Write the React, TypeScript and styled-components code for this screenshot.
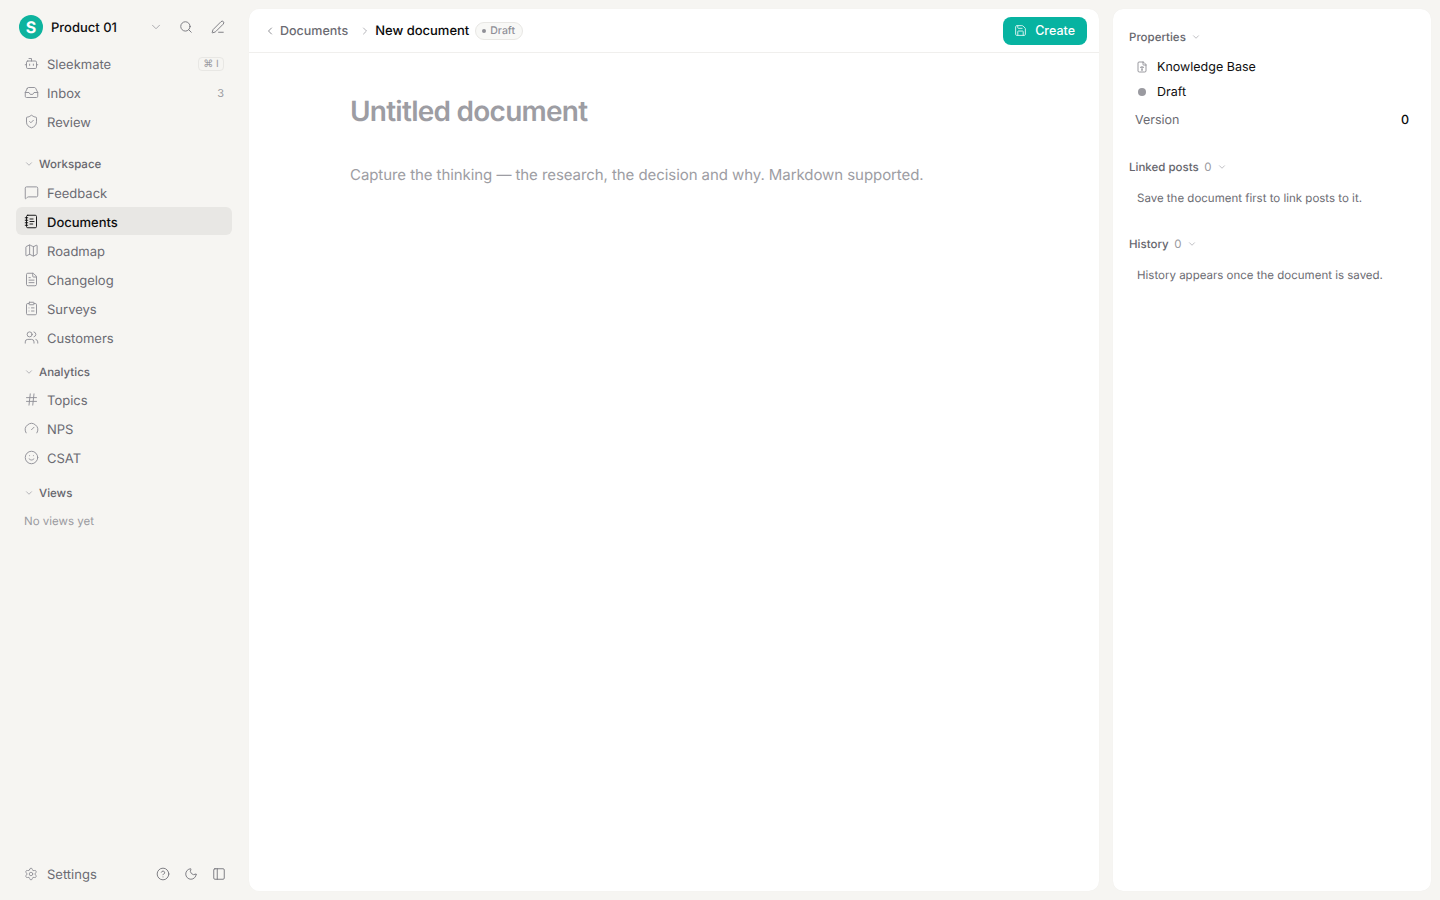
import { createGlobalStyle, styled } from "styled-components"
import {
  Bot,
  ChevronDown,
  ChevronLeft,
  ChevronRight,
  CircleHelp,
  ClipboardList,
  FileText,
  FileType,
  Gauge,
  Hash,
  Inbox,
  Map,
  MessageSquare,
  Moon,
  NotebookText,
  PanelLeft,
  PenLine,
  Save,
  Search,
  Settings,
  ShieldCheck,
  Smile,
  Users,
  type LucideIcon,
} from "lucide-react"

const GlobalStyle = createGlobalStyle`
  html, body {
    margin: 0;
    padding: 0;
    height: 100%;
    background: #f6f5f2;
  }
  body {
    font-family: Inter, "Liberation Sans", sans-serif;
    color: #0a0a0a;
    text-rendering: geometricPrecision;
  }
  * {
    box-sizing: border-box;
  }
`

const Shell = styled.div`
  display: flex;
  width: 1440px;
  height: 900px;
  overflow: hidden;
  padding: 9px 9px 9px 0;
`

const Sidebar = styled.aside`
  display: flex;
  flex-direction: column;
  flex: 0 0 249px;
  height: 882px;
  padding: 0 17px 0 16px;
`

const BrandRow = styled.div`
  display: flex;
  align-items: center;
  height: 36px;
  padding-left: 3px;
  color: #0f0f10;
  font-size: 13px;
  font-weight: 500;
`

const BrandName = styled.span`
  padding-top: 2px;
`

const Logo = styled.div`
  display: flex;
  align-items: center;
  justify-content: center;
  width: 24px;
  height: 24px;
  margin-right: 8px;
  border-radius: 50%;
  background: #0db39e;
  color: #fff;
  font-size: 16px;
  font-weight: 700;
`

const BrandIcons = styled.div`
  display: flex;
  align-items: center;
  margin-left: auto;
  padding-right: 7px;
  color: #6f6f76;
`

const BrandIcon = styled.span<{ $gap?: number }>`
  display: flex;
  margin-left: ${(p) => p.$gap ?? 0}px;
`

const NavList = styled.nav<{ $top: number }>`
  display: flex;
  flex-direction: column;
  gap: 1px;
  margin-top: ${(p) => p.$top}px;
`

const NavRow = styled.div<{ $active?: boolean }>`
  display: flex;
  align-items: center;
  height: 28px;
  padding: 0 8px 0 7.5px;
  border-radius: 6px;
  background: ${(p) => (p.$active ? "#e8e7e4" : "transparent")};
  color: ${(p) => (p.$active ? "#0f0f10" : "#6b6b72")};
  font-size: 13px;
  font-weight: ${(p) => (p.$active ? 500 : 400)};
  svg {
    margin-top: 1px;
    color: ${(p) => (p.$active ? "#0f0f10" : "#8f8f96")};
  }
`

const NavLabel = styled.span`
  margin-left: 8.5px;
  padding-top: 4px;
`

const FooterLabel = styled.span`
  margin-left: 9px;
  padding-top: 2px;
`

const Shortcut = styled.span`
  display: flex;
  align-items: center;
  justify-content: center;
  margin: 2px 0 0 auto;
  width: 26px;
  height: 14px;
  border: 1px solid #e8e7e4;
  border-radius: 4px;
  color: #9a9aa0;
  font-size: 10px;
  line-height: 1;
`

const Count = styled.span`
  margin: 2px 0 0 auto;
  color: #9a9aa0;
  font-size: 11px;
`

const SectionHead = styled.div<{ $top: number }>`
  display: flex;
  align-items: center;
  gap: 5px;
  height: 16px;
  margin-top: ${(p) => p.$top}px;
  padding-left: 8px;
  color: #66666d;
  font-size: 11.5px;
  font-weight: 500;
  svg {
    color: #8f8f96;
  }
`

const EmptyViews = styled.div`
  margin-top: 13px;
  padding-left: 8px;
  color: #9a9aa0;
  font-size: 11.5px;
  line-height: 14px;
`

const SidebarFooter = styled.div`
  display: flex;
  align-items: center;
  height: 28px;
  margin-top: auto;
  margin-bottom: 3px;
  padding: 0 6px 0 8px;
  color: #6b6b72;
  font-size: 13px;
  svg {
    color: #8f8f96;
  }
`

const FooterIcons = styled.div`
  display: flex;
  align-items: center;
  gap: 14px;
  margin-left: auto;
  svg {
    color: #6f6f76;
  }
`

const Panel = styled.section`
  background: #fff;
  border-radius: 10px;
  box-shadow: 0 0 1px rgba(0, 0, 0, 0.06);
`

const Main = styled(Panel)`
  flex: 0 0 850px;
  display: flex;
  flex-direction: column;
`

const TopBar = styled.header`
  display: flex;
  align-items: center;
  height: 44px;
  padding: 0 12px 0 15px;
  border-bottom: 1px solid #f0efed;
`

const Crumb = styled.span`
  margin-left: 4px;
  padding-top: 2px;
  color: #6b6b72;
  font-size: 12.5px;
  font-weight: 450;
`

const Separator = styled.span`
  display: flex;
  margin: 0 4px 0 11px;
  color: #9a9aa0;
`

const CrumbCurrent = styled.span`
  color: #0a0a0a;
  font-size: 13px;
  font-weight: 450;
`

const DraftTag = styled.span`
  display: flex;
  align-items: center;
  gap: 4px;
  height: 18px;
  margin-left: 6px;
  padding: 0 7px 0 6px;
  border: 1px solid #e8e7e4;
  border-radius: 9px;
  background: #f8f8f6;
  color: #8f8f96;
  font-size: 10.5px;
  font-weight: 500;
`

const TagDot = styled.i`
  width: 4px;
  height: 4px;
  border-radius: 50%;
  background: #8f8f96;
`

const CreateButton = styled.button`
  display: flex;
  align-items: center;
  gap: 8px;
  height: 28px;
  margin-left: auto;
  padding: 0 12px 0 11.5px;
  border: 0;
  border-radius: 8px;
  background: #07b3a1;
  color: #fff;
  font-family: inherit;
  font-size: 12.5px;
  font-weight: 500;
  svg {
    opacity: 0.85;
  }
`

const Editor = styled.div`
  padding: 40px 101px 0;
`

const TitleText = styled.h1`
  margin: 0;
  color: #9d9da3;
  font-size: 28px;
  font-weight: 600;
  line-height: 36px;
  letter-spacing: -0.75px;
`

const BodyHint = styled.p`
  margin: 34px 0 0;
  color: #9d9da3;
  font-size: 15px;
  line-height: 24px;
  letter-spacing: -0.07px;
`

const Aside = styled(Panel)`
  flex: 0 0 318px;
  margin-left: 14px;
  padding: 20px 16px;
`

const AsideHead = styled.div<{ $top?: number }>`
  display: flex;
  align-items: center;
  gap: 5.5px;
  height: 16px;
  margin-top: ${(p) => p.$top ?? 0}px;
  color: #66666d;
  font-size: 11.5px;
  font-weight: 500;
  svg {
    color: #9a9aa0;
  }
`

const HeadCount = styled.span`
  color: #9a9aa0;
  font-weight: 400;
`

const PropRow = styled.div<{ $top: number }>`
  display: flex;
  align-items: center;
  height: 20px;
  margin-top: ${(p) => p.$top}px;
  padding-left: 7px;
  color: #0f0f10;
  font-size: 12.5px;
  svg {
    color: #7a7a80;
  }
`

const PropIcon = styled.span`
  display: flex;
  align-items: center;
  justify-content: center;
  width: 12px;
  margin-right: 9px;
`

const StatusDot = styled.i`
  width: 8px;
  height: 8px;
  border-radius: 50%;
  background: #9a9aa0;
`

const VersionRow = styled.div`
  display: flex;
  align-items: center;
  justify-content: space-between;
  height: 20px;
  margin-top: 8px;
  padding: 0 6px;
  color: #6b6b72;
  font-size: 12.5px;
  b {
    color: #0a0a0a;
    font-weight: 500;
  }
`

const AsideNote = styled.p`
  margin: 15px 0 0;
  padding-left: 8px;
  color: #6b6b72;
  font-size: 11.5px;
  line-height: 16px;
`

type NavItem = { label: string; icon: LucideIcon; active?: boolean }

const workspace: NavItem[] = [
  { label: "Feedback", icon: MessageSquare },
  { label: "Documents", icon: NotebookText, active: true },
  { label: "Roadmap", icon: Map },
  { label: "Changelog", icon: FileText },
  { label: "Surveys", icon: ClipboardList },
  { label: "Customers", icon: Users },
]

const analytics: NavItem[] = [
  { label: "Topics", icon: Hash },
  { label: "NPS", icon: Gauge },
  { label: "CSAT", icon: Smile },
]

const renderRow = ({ label, icon: Icon, active }: NavItem) => (
  <NavRow key={label} $active={active}>
    <Icon size={15} strokeWidth={1.5} />
    <NavLabel>{label}</NavLabel>
  </NavRow>
)

const App = () => {
  return (
    <>
      <GlobalStyle />
      <Shell>
        <Sidebar>
          <BrandRow>
            <Logo>S</Logo>
            <BrandName>Product 01</BrandName>
            <BrandIcons>
              <BrandIcon>
                <ChevronDown size={14} strokeWidth={1.5} color="#a0a0a6" />
              </BrandIcon>
              <BrandIcon $gap={16}>
                <Search size={14} strokeWidth={1.5} />
              </BrandIcon>
              <BrandIcon $gap={18}>
                <PenLine size={14} strokeWidth={1.5} />
              </BrandIcon>
            </BrandIcons>
          </BrandRow>

          <NavList $top={4}>
            <NavRow>
              <Bot size={15} strokeWidth={1.5} />
              <NavLabel>Sleekmate</NavLabel>
              <Shortcut>⌘ I</Shortcut>
            </NavRow>
            <NavRow>
              <Inbox size={15} strokeWidth={1.5} />
              <NavLabel>Inbox</NavLabel>
              <Count>3</Count>
            </NavRow>
            <NavRow>
              <ShieldCheck size={15} strokeWidth={1.5} />
              <NavLabel>Review</NavLabel>
            </NavRow>
          </NavList>

          <SectionHead $top={21}>
            <ChevronDown size={10} strokeWidth={1.5} />
            Workspace
          </SectionHead>
          <NavList $top={6}>{workspace.map(renderRow)}</NavList>

          <SectionHead $top={13}>
            <ChevronDown size={10} strokeWidth={1.5} />
            Analytics
          </SectionHead>
          <NavList $top={5}>{analytics.map(renderRow)}</NavList>

          <SectionHead $top={14}>
            <ChevronDown size={10} strokeWidth={1.5} />
            Views
          </SectionHead>
          <EmptyViews>No views yet</EmptyViews>

          <SidebarFooter>
            <Settings size={14} strokeWidth={1.5} />
            <FooterLabel>Settings</FooterLabel>
            <FooterIcons>
              <CircleHelp size={14} strokeWidth={1.5} />
              <Moon size={14} strokeWidth={1.5} />
              <PanelLeft size={14} strokeWidth={1.5} />
            </FooterIcons>
          </SidebarFooter>
        </Sidebar>

        <Main>
          <TopBar>
            <ChevronLeft size={12} strokeWidth={1.5} color="#6b6b72" />
            <Crumb>Documents</Crumb>
            <Separator>
              <ChevronRight size={12} strokeWidth={1.5} />
            </Separator>
            <CrumbCurrent>New document</CrumbCurrent>
            <DraftTag>
              <TagDot />
              Draft
            </DraftTag>
            <CreateButton>
              <Save size={13} strokeWidth={1.75} />
              Create
            </CreateButton>
          </TopBar>
          <Editor>
            <TitleText>Untitled document</TitleText>
            <BodyHint>
              Capture the thinking — the research, the decision and why. Markdown supported.
            </BodyHint>
          </Editor>
        </Main>

        <Aside>
          <AsideHead>
            Properties
            <ChevronDown size={10} strokeWidth={1.5} />
          </AsideHead>
          <PropRow $top={12}>
            <PropIcon>
              <FileType size={12} strokeWidth={1.5} />
            </PropIcon>
            Knowledge Base
          </PropRow>
          <PropRow $top={5}>
            <PropIcon>
              <StatusDot />
            </PropIcon>
            Draft
          </PropRow>
          <VersionRow>
            Version
            <b>0</b>
          </VersionRow>
          <AsideHead $top={29}>
            Linked posts <HeadCount>0</HeadCount>
            <ChevronDown size={10} strokeWidth={1.5} />
          </AsideHead>
          <AsideNote>Save the document first to link posts to it.</AsideNote>
          <AsideHead $top={30}>
            History <HeadCount>0</HeadCount>
            <ChevronDown size={10} strokeWidth={1.5} />
          </AsideHead>
          <AsideNote>History appears once the document is saved.</AsideNote>
        </Aside>
      </Shell>
    </>
  )
}

export default App
